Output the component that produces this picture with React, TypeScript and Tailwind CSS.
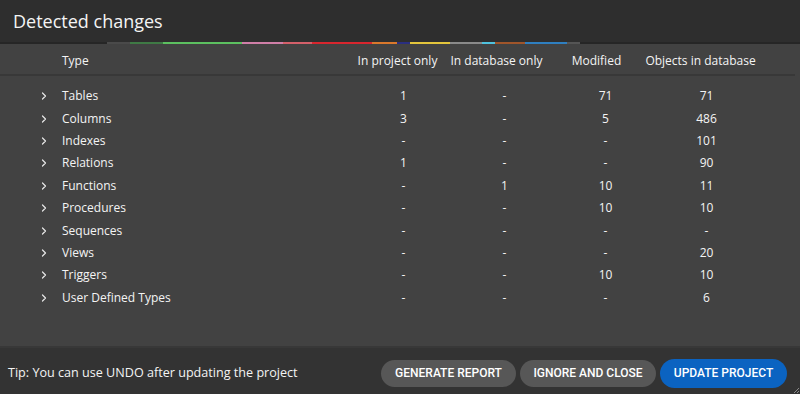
import { ChevronRight } from 'lucide-react';

const rows: [string, string, string, string, string][] = [
  ['Tables', '1', '-', '71', '71'],
  ['Columns', '3', '-', '5', '486'],
  ['Indexes', '-', '-', '-', '101'],
  ['Relations', '1', '-', '-', '90'],
  ['Functions', '-', '1', '10', '11'],
  ['Procedures', '-', '-', '10', '10'],
  ['Sequences', '-', '-', '-', '-'],
  ['Views', '-', '-', '-', '20'],
  ['Triggers', '-', '-', '10', '10'],
  ['User Defined Types', '-', '-', '-', '6'],
];

// coloured strip under the title bar
const strip: [string, number][] = [
  ['transparent', 107],
  ['#4a4a4a', 23],
  ['#3f7a45', 33],
  ['#5cc060', 79],
  ['#d07fa8', 41],
  ['#d4606a', 29],
  ['#d8262e', 60],
  ['#d9782c', 25],
  ['#2a2f80', 13],
  ['#e3c53c', 40],
  ['#8a8a8a', 32],
  ['#4fc2de', 13],
  ['#a0552a', 30],
  ['#2f7fc0', 42],
  ['#555555', 13],
];

const btn = 'h-[27px] whitespace-nowrap rounded-full px-[12px] text-[12px] font-medium uppercase text-white';

export default function App() {
  return (
    <div className="flex h-[394px] w-[800px] flex-col bg-[#424242] text-[#f4f4f4] [font-family:'Open_Sans',sans-serif]">
      <div className="flex h-[42px] items-center bg-[#2e2e2e] pl-[13px] text-[18px]">Detected changes</div>
      <div className="flex h-[2px] bg-[#262626]">
        {strip.map(([c, w], i) => (
          <div key={i} className="h-[2px] shrink-0" style={{ backgroundColor: c, width: w }} />
        ))}
      </div>

      <div className="flex-1 text-[12px] font-medium">
        <div className="mr-[5px] flex h-[32px] items-center whitespace-nowrap border-b-2 border-[#383838] pt-[4px]">
          <div className="w-[353px] pl-[62px]">Type</div>
          <div className="flex w-[101px] justify-center pr-[12px]">In project only</div>
          <div className="flex w-[101px] justify-center pr-[16px]">In database only</div>
          <div className="flex w-[101px] justify-center pr-[18px]">Modified</div>
          <div className="flex w-[101px] justify-center pr-[12px]">Objects in database</div>
        </div>
        <div className="pt-[9px]">
          {rows.map(([name, a, b, c, d]) => (
            <div key={name} className="flex h-[22.4px] items-center">
              <div className="flex w-[353px] items-center">
                <ChevronRight size={12} strokeWidth={2.4} className="ml-[38px] mr-[12px] text-[#e8e8e8]" />
                <span>{name}</span>
              </div>
              <div className="w-[101px] text-center">{a}</div>
              <div className="w-[101px] text-center">{b}</div>
              <div className="w-[101px] text-center">{c}</div>
              <div className="w-[101px] text-center">{d}</div>
            </div>
          ))}
        </div>
      </div>

      <div className="relative flex h-[48px] items-center border-t-2 border-[#383838] bg-[#333333] pl-[8px] pr-[13px] pt-[4px]">
        <span className="flex-1 text-[12.6px]">Tip: You can use UNDO after updating the project</span>
        <div className="flex items-center gap-[4px] [font-family:Roboto,sans-serif]">
          <button className={`${btn} w-[135px] bg-[#575757]`}>Generate report</button>
          <button className={`${btn} w-[136px] bg-[#575757]`}>Ignore and close</button>
          <button className={`${btn} h-[29px] w-[127px] bg-[#0b63c1]`}>Update project</button>
        </div>
        <svg className="absolute bottom-[1px] right-[1px]" width="6" height="6" viewBox="0 0 6 6">
          <path d="M1 6 L6 1 M4 6 L6 4" stroke="#8a8a8a" strokeWidth="1" />
        </svg>
      </div>
    </div>
  );
}
